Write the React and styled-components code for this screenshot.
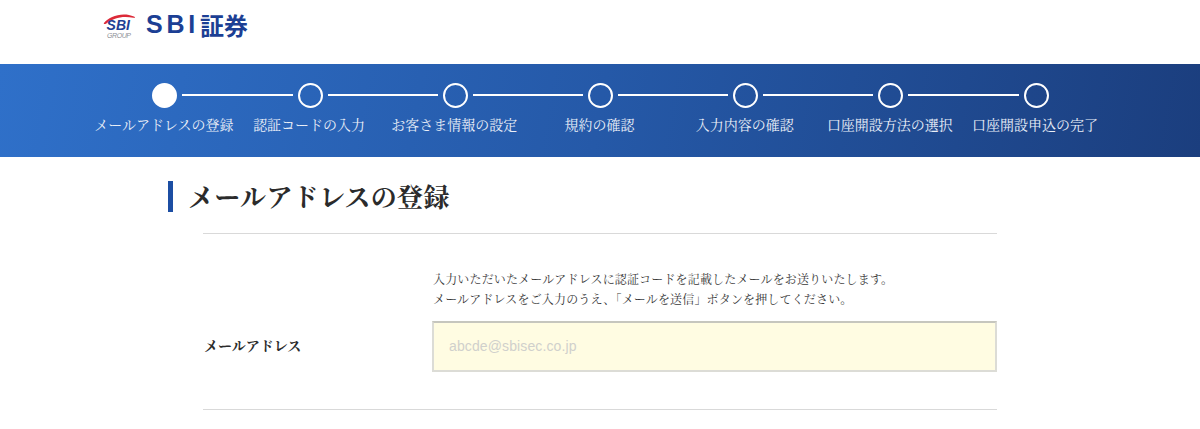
import React from 'react'
import styled, { createGlobalStyle } from 'styled-components'

const SERIF = '"Liberation Serif", "Noto Serif CJK JP", "Noto Sans CJK JP", serif'
const SANS = '"Liberation Sans", "Noto Sans CJK JP", sans-serif'

const steps = [
  'メールアドレスの登録',
  '認証コードの入力',
  'お客さま情報の設定',
  '規約の確認',
  '入力内容の確認',
  '口座開設方法の選択',
  '口座開設申込の完了',
]

const App = () => {
  return (
    <>
      <Global />
      <Header>
        <Emblem width="36" height="30" viewBox="0 0 36 30" aria-hidden="true">
          <path d="M1 10C6 3 20 -1.5 31 3.5 32.6 4.4 32 5.2 30.4 4.8 20 2.4 10 5 3.4 10.4 1.6 11.6 .3 11.2 1 10Z" fill="#dc2a38" />
          <text x="3.6" y="17" fontFamily="Liberation Sans" fontSize="14" fontWeight="700" fontStyle="italic" fill="#1f3f94">SBI</text>
          <text x="4" y="25" fontFamily="Liberation Sans" fontSize="7" fontStyle="italic" fill="#8b8f96" textLength="24">GROUP</text>
        </Emblem>
        <Wordmark>
          <WordLatin>SBI</WordLatin>
          <WordKanji>証券</WordKanji>
        </Wordmark>
      </Header>

      <Band>
        <StepList>
          {steps.map((label, i) => (
            <Step key={label}>
              <Track>
                <Line $hidden={i === 0} />
                <Dot $active={i === 0} />
                <Line $hidden={i === steps.length - 1} />
              </Track>
              <StepLabel>{label}</StepLabel>
            </Step>
          ))}
        </StepList>
      </Band>

      <Main>
        <Title>メールアドレスの登録</Title>
        <Form>
          <Row>
            <FieldLabel>メールアドレス</FieldLabel>
            <FieldBody>
              <Note>
                入力いただいたメールアドレスに認証コードを記載したメールをお送りいたします。
                <br />
                メールアドレスをご入力のうえ、「メールを送信」ボタンを押してください。
              </Note>
              <EmailInput type="text" placeholder="abcde@sbisec.co.jp" />
            </FieldBody>
          </Row>
        </Form>
      </Main>
    </>
  )
}

export default App

const Global = createGlobalStyle`
  html, body {
    margin: 0;
    padding: 0;
    background: #ffffff;
    overflow: hidden;
  }
  body {
    font-family: ${SERIF};
    color: #333333;
  }
`

const Header = styled.header`
  height: 64px;
  box-sizing: border-box;
  padding: 7px 0 0 103px;
  display: flex;
  align-items: flex-start;
  gap: 7px;
`

const Emblem = styled.svg`
  display: block;
  margin-top: 6px;
`

const Wordmark = styled.div`
  display: flex;
  align-items: center;
  height: 34px;
  color: #1c3f94;
  font-family: ${SANS};
  font-weight: 700;
  white-space: nowrap;
`

const WordLatin = styled.span`
  font-size: 25px;
  letter-spacing: 3.8px;
  width: 54px;
`

const WordKanji = styled.span`
  font-size: 24px;
`

const Band = styled.section`
  height: 93px;
  box-sizing: border-box;
  padding-top: 19px;
  background: linear-gradient(100deg, #2f70c9 0%, #2559a8 50%, #1b3e7e 100%);
  display: flex;
  justify-content: center;
`

const StepList = styled.ol`
  list-style: none;
  margin: 0 0 0 1px;
  padding: 0;
  display: grid;
  grid-template-columns: repeat(7, 145.2px);
`

const Step = styled.li`
  display: flex;
  flex-direction: column;
  align-items: center;
`

const Track = styled.div`
  width: 100%;
  height: 25px;
  display: flex;
  align-items: center;
  gap: 5px;
`

const Line = styled.span`
  flex: 1;
  height: 2px;
  margin-bottom: 1px;
  background: ${(p) => (p.$hidden ? 'transparent' : '#ffffff')};
`

const Dot = styled.span`
  width: 25px;
  height: 25px;
  box-sizing: border-box;
  border-radius: 50%;
  border: 2px solid #ffffff;
  background: ${(p) => (p.$active ? '#ffffff' : 'transparent')};
`

const StepLabel = styled.span`
  margin-top: 8px;
  margin-left: -2px;
  font-size: 14px;
  line-height: 20px;
  color: #eaeff8;
  white-space: nowrap;
`

const Main = styled.main`
  width: 864px;
  margin: 0 auto;
`

const Title = styled.h1`
  margin: 24px 0 0;
  height: 31px;
  padding-left: 15px;
  border-left: 5px solid #1c4ea3;
  font-size: 26px;
  line-height: 35px;
  font-weight: 700;
  letter-spacing: 0.3px;
  color: #2b2b2b;
  white-space: nowrap;
`

const Form = styled.div`
  margin: 21px 0 0 35px;
  width: 794px;
  border-top: 1px solid #d9d9d9;
  border-bottom: 1px solid #d9d9d9;
`

const Row = styled.div`
  display: flex;
  align-items: flex-end;
  padding: 35px 0 37px;
`

const FieldLabel = styled.div`
  width: 229px;
  flex: none;
  height: 51px;
  line-height: 51px;
  padding-left: 1px;
  box-sizing: border-box;
  font-size: 14px;
  font-weight: 700;
  color: #2b2b2b;
`

const FieldBody = styled.div`
  flex: 1;
`

const Note = styled.p`
  margin: 0 0 11px;
  padding: 1px 0 0 1px;
  font-size: 12px;
  line-height: 20px;
  letter-spacing: 0.16px;
  color: #3a3a3a;
  white-space: nowrap;
`

const EmailInput = styled.input`
  display: block;
  width: 100%;
  height: 51px;
  box-sizing: border-box;
  padding: 0 15px 2px;
  border: 2px solid #dcdcd6;
  border-top-color: #c6c6be;
  border-radius: 0;
  background: #fffce2;
  outline: none;
  font-family: ${SANS};
  font-size: 14px;
  letter-spacing: 0.12px;

  &::placeholder {
    color: #d0d0cc;
    opacity: 1;
  }
`
